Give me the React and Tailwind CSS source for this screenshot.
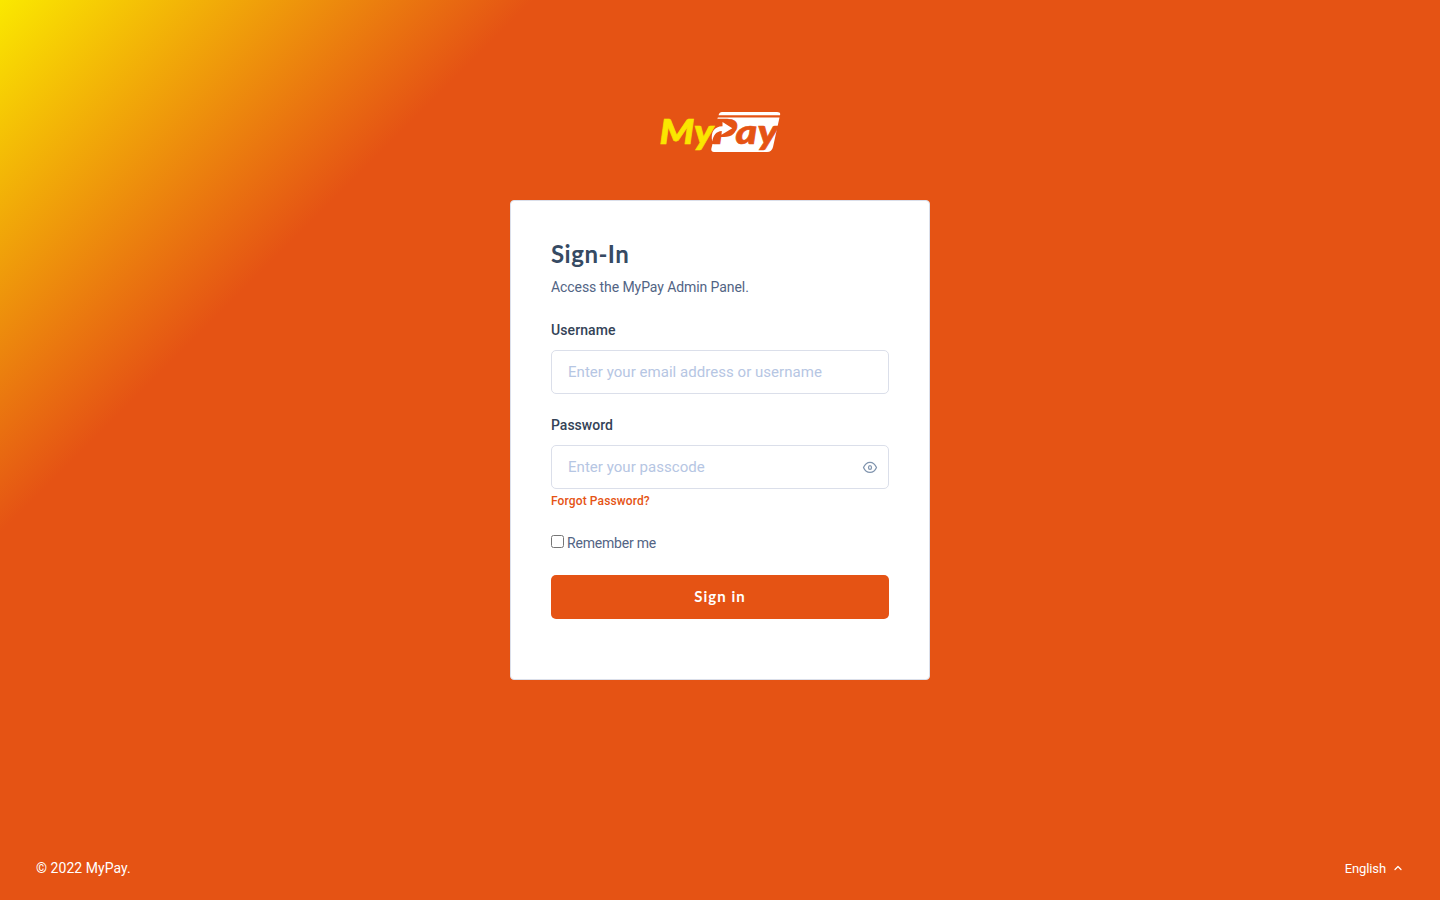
import { ChevronUp } from "lucide-react";

function Logo() {
  return (
    <svg className="block h-10 w-30 overflow-visible" viewBox="0 0 120 40" role="img" aria-label="MyPay">
      <path d="M62 0H117Q121 0 120 3.200H58.500Q59.500 0 62 0Z" fill="#fff" />
      <path d="M57.800 5.500H119.500L113 35Q111.800 40 107 40H54Q50.500 40 51.500 36L52.500 32H59L64 7.500H57.300Z" fill="#fff" />
      <g fontFamily="'Lato', sans-serif" fontStyle="italic" fontWeight="900" fontSize="34">
        <text x="-0.500" y="32" fill="#fae600" stroke="#fae600" strokeWidth="0.600" textLength="54" lengthAdjust="spacingAndGlyphs">My</text>
        <text x="52.500" y="32" fill="#e55314" stroke="#e55314" strokeWidth="0.600" textLength="65.500" lengthAdjust="spacingAndGlyphs">Pay</text>
      </g>
      <path d="M60 8H69Q76 8.500 76 14Q76 25 64 25H58Z" fill="#e55314" />
      <path d="M52.200 29.500C50.500 20 54 14.500 62.500 14.200L62.500 10L72.300 16.300L61.500 22.800L61.800 19C56 19.500 53.500 23 52.200 29.500Z" fill="#fff" />
    </svg>
  );
}

function EyeIcon() {
  return (
    <svg className="size-4 text-[#8094ae]" viewBox="0 0 16 16" fill="none" stroke="currentColor" strokeWidth="1.250" strokeLinejoin="round">
      <path d="M1.500 8.500C3 5 5.200 3.300 8 3.300S13 5 14.500 8.500C13 12 10.800 13.400 8 13.400S3 12 1.500 8.500Z" />
      <ellipse cx="8" cy="8.500" rx="1.500" ry="1.900" />
    </svg>
  );
}

export default function App() {
  return (
    <div className="flex min-h-screen flex-col bg-[linear-gradient(135deg,#fae800_0px,#e55314_377px)] font-['Roboto',sans-serif] text-sm text-[#526484]">
      <main className="flex flex-1 flex-col items-center pt-28">
        <Logo />
        <section className="mt-12 h-120 w-105 rounded-sm border border-[#dbdfea] bg-white p-10">
          <h1 className="-mt-0.5 font-['Lato',sans-serif] text-2xl leading-[30px] font-bold tracking-[0.5px] text-[#364a63]">Sign-In</h1>
          <p className="mt-1.5 leading-6 tracking-[-0.08px]">Access the MyPay Admin Panel.</p>
          <form onSubmit={(e) => e.preventDefault()}>
            <label htmlFor="user" className="mt-[21px] block leading-5 font-medium tracking-[0.1px] text-[#344357]">Username</label>
            <input id="user" placeholder="Enter your email address or username" className="mt-2.5 block h-11 w-full rounded-[5px] border border-[#dbdfea] px-4 text-[15px] tracking-[0.04px] outline-none placeholder:text-[#b6c6e3]" />
            <label htmlFor="pass" className="mt-[21px] block leading-5 font-medium text-[#344357]">Password</label>
            <div className="mt-2.5 flex h-11 items-center rounded-[5px] border border-[#dbdfea] pr-2.5 pl-4">
              <input id="pass" type="password" placeholder="Enter your passcode" className="h-full min-w-0 flex-1 text-[15px] tracking-[0.04px] outline-none placeholder:text-[#b6c6e3]" />
              <EyeIcon />
            </div>
            <a href="#" className="mt-[3px] block text-xs leading-[18px] font-medium tracking-[0.12px] text-[#e55314]">Forgot Password?</a>
            <label className="mt-[21px] flex h-6 items-center gap-[3px]">
              <input type="checkbox" className="mb-[3px] size-[13px]" />
              <span className="tracking-[-0.2px]">Remember me</span>
            </label>
            <button className="mt-5 h-11 w-full rounded-[5px] bg-[#e55314] font-['Lato',sans-serif] text-[15px] font-bold tracking-[1px] text-white">Sign in</button>
          </form>
        </section>
      </main>
      <footer className="flex h-16 items-center justify-between px-9 text-white">
        <p className="tracking-[0.05px]">© 2022 MyPay.</p>
        <a href="#" className="flex items-center gap-1.5 text-[13px] tracking-[-0.1px]"><span className="pt-0.5">English</span><ChevronUp className="size-3" strokeWidth={2.5} /></a>
      </footer>
    </div>
  );
}
